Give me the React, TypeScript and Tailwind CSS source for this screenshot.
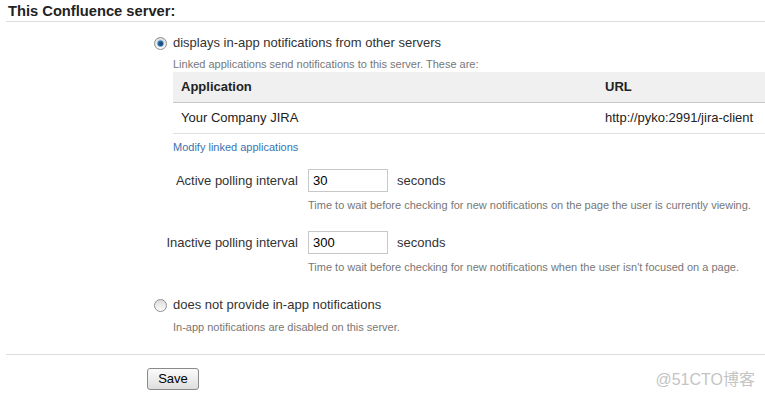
const FONT = { fontFamily: '"Liberation Sans", Arial, sans-serif' };

function Radio({ checked }: { checked?: boolean }) {
  return (
    <span className="w-[13px] h-[13px] rounded-full border border-[#8e8f8f] bg-gradient-to-b from-[#dcdcdc] to-[#fbfbfb] flex items-center justify-center shrink-0">
      {checked && <span className="w-[7px] h-[7px] rounded-full bg-gradient-to-br from-[#2b6fa8] to-[#0c3a66] border border-[#5a9ad0]" />}
    </span>
  );
}

function PollRow({ label, value, help }: { label: string; value: string; help: string }) {
  return (
    <div>
      <div className="flex items-center">
        <span className="w-[308px] text-right pr-[10px] text-[13px] text-[#333]">{label}</span>
        <div className="w-[80px] h-[23px] border border-[#c8c8c8] bg-white px-[4px] flex items-center text-[13px] text-black">
          {value}
        </div>
        <span className="ml-[9px] text-[13px] text-[#333]">seconds</span>
      </div>
      <p className="pl-[308px] mt-[6px] text-[11px] text-[#777] leading-[14px]">{help}</p>
    </div>
  );
}

export default function App() {
  return (
    <div className="relative w-[765px] h-[396px] bg-white overflow-hidden" style={FONT}>
      <h2 className="pl-[8px] pt-[3px] h-[21px] text-[14.7px] font-bold text-[#222] leading-[17px]">
        This Confluence server:
      </h2>
      <div className="ml-[6px] h-px bg-[#dcdcdc]" />

      <div className="pl-[154px] pt-[13px]">
        <div className="flex items-center gap-[6px] h-[16px]">
          <Radio checked />
          <span className="text-[13px] text-[#333]">displays in-app notifications from other servers</span>
        </div>
      </div>

      <div className="pl-[173px]">
        <p className="mt-[6px] text-[11px] text-[#777] leading-[14px]">
          Linked applications send notifications to this server. These are:
        </p>
        <div className="mt-[1px]">
          <div className="flex h-[31px] items-center bg-[#f0f0f0] border-b border-[#c8c8c8] text-[13px] font-bold text-[#222]">
            <span className="pl-[8px] w-[432px]">Application</span>
            <span>URL</span>
          </div>
          <div className="flex h-[31px] items-center border-b border-[#e0e0e0] text-[13px] text-[#222]">
            <span className="pl-[8px] w-[432px]">Your Company JIRA</span>
            <span>http://pyko:2991/jira-client</span>
          </div>
        </div>
        <p className="mt-[6px] text-[11px] text-[#3b73af] leading-[14px]">Modify linked applications</p>
      </div>

      <div className="mt-[15px] flex flex-col gap-[19px]">
        <PollRow
          label="Active polling interval"
          value="30"
          help="Time to wait before checking for new notifications on the page the user is currently viewing."
        />
        <PollRow
          label="Inactive polling interval"
          value="300"
          help="Time to wait before checking for new notifications when the user isn't focused on a page."
        />
      </div>

      <div className="pl-[154px] mt-[23px]">
        <div className="flex items-center gap-[6px] h-[16px]">
          <Radio />
          <span className="text-[13px] text-[#333]">does not provide in-app notifications</span>
        </div>
        <p className="pl-[19px] mt-[7px] text-[11px] text-[#777] leading-[14px]">
          In-app notifications are disabled on this server.
        </p>
      </div>

      <div className="ml-[6px] mt-[20px] h-px bg-[#dcdcdc]" />

      <div className="pl-[147px] mt-[11px]">
        <button className="w-[52px] h-[22px] border border-[#8a8a8a] rounded-[3px] bg-gradient-to-b from-[#fbfbfb] to-[#dedede] text-[13px] text-black leading-none">
          Save
        </button>
      </div>

      <span
        className="absolute right-[10px] top-[368px] text-[16px] text-[#c4c4c4]"
        style={{ fontFamily: '"Liberation Sans", "Noto Sans CJK SC", sans-serif' }}
      >
        @51CTO博客
      </span>
    </div>
  );
}
